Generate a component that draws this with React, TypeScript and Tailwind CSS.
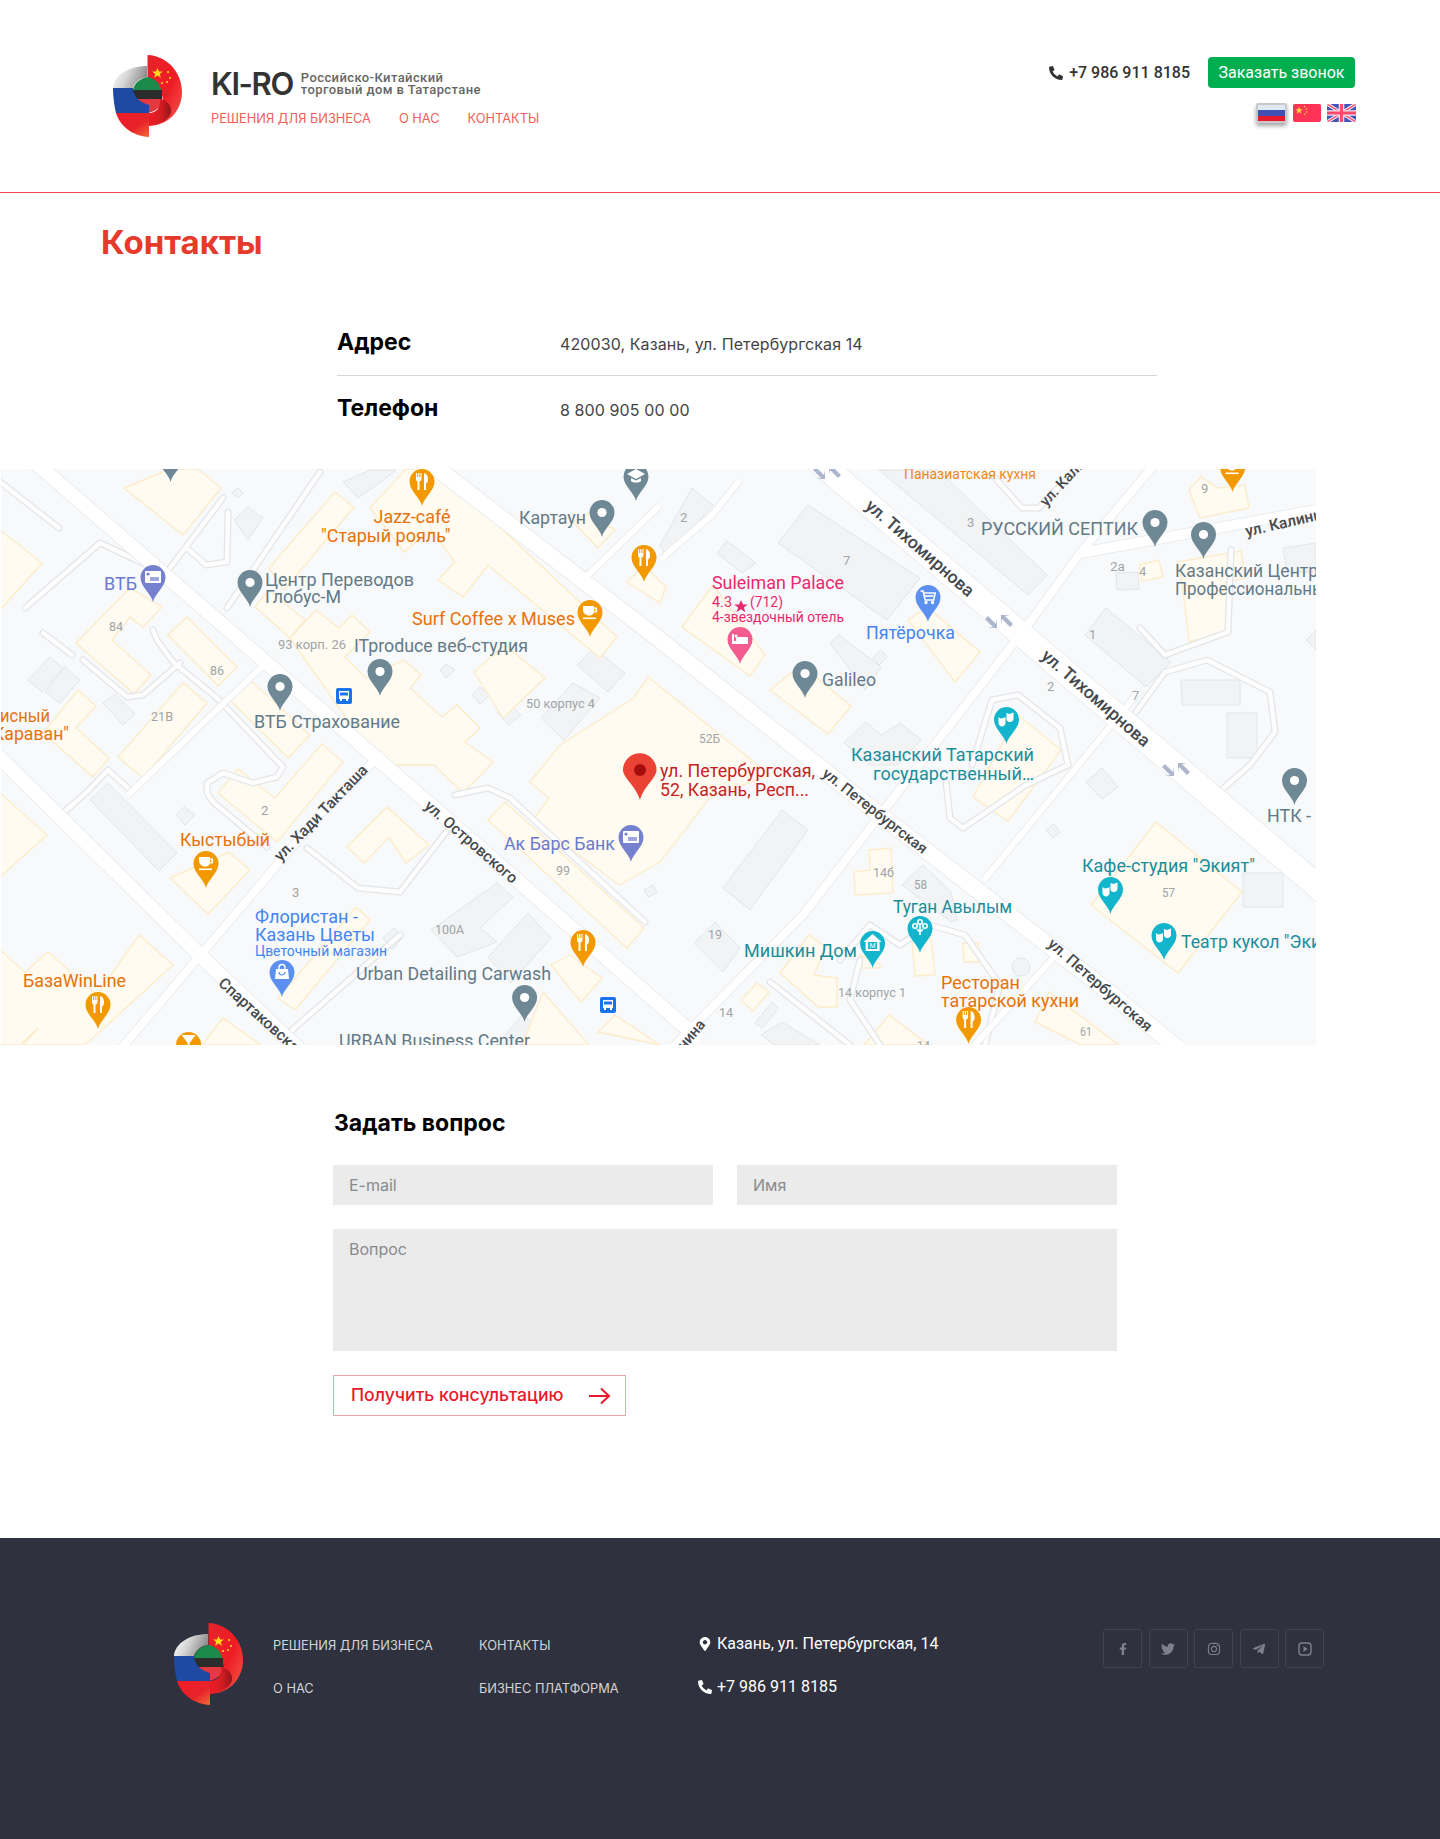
import React from "react";
import { FaPhoneAlt, FaMapMarkerAlt, FaFacebookF, FaTwitter, FaInstagram, FaTelegramPlane } from "react-icons/fa";

const pts = (a: number[]) => {
  const o: string[] = [];
  for (let i = 0; i < a.length; i += 2) o.push(a[i] + "," + a[i + 1]);
  return o.join(" ");
};

const YELLOW: number[][] = [
  [124,488,170,469,198,469,221,488,183,535],
  [0,530,42,563,0,610],
  [76,643,130,588,162,607,143,627,130,617,112,640,151,675,134,694],
  [168,635,187,617,237,667,218,686],
  [118,757,183,683,207,703,143,778],
  [43,733,78,690,96,706,76,728,109,758,93,777],
  [230,700,250,680,310,735,288,758],
  [290,638,316,610,339,628,352,615,370,632,345,657,366,678,404,660,421,675,410,688,442,717,457,705,480,728,465,742,493,762,463,793,434,765,379,765],
  [370,508,406,469,438,469,617,637,600,658,488,565,463,597,438,580,455,562,431,530,404,552],
  [269,568,335,492,354,507,284,590],
  [255,607,269,590,305,620,290,638],
  [573,522,589,513,615,530,598,548],
  [627,582,644,565,666,587,660,603],
  [474,672,505,645,545,678,503,718],
  [634,698,648,677,770,775,710,797,660,862,619,885,533,820,549,798,530,782,560,745],
  [347,847,387,807,429,845,406,863,389,837,364,863],
  [170,878,229,852,250,870,208,914],
  [218,793,238,769,275,798,322,744,343,762,277,842],
  [0,793,47,835,0,877],
  [0,950,25,972,48,952,97,995,139,935,173,965,85,1045,23,1045,38,1028,20,1045,0,1045],
  [278,998,356,907,370,920,295,1010],
  [202,1045,223,1018,261,1045],
  [551,965,570,955,602,978,581,1002],
  [543,992,589,1045,522,1045],
  [598,1032,615,1015,660,1045],
  [488,820,505,802,644,928,627,948],
  [854,872,870,870,869,850,891,848,893,893,855,895],
  [963,943,978,943,979,962,964,962],
  [912,940,931,938,935,975,915,976],
  [780,973,809,935,826,947,814,975,837,978,837,1007,818,1007],
  [860,955,881,965,879,968,861,968],
  [741,1000,757,983,769,992,753,1011],
  [864,1045,889,1015,929,1045],
  [1035,1022,1049,992,1119,1045,1081,1045],
  [1091,905,1156,822,1242,892,1178,973],
  [1018,715,1061,750,1008,821,973,797],
  [682,627,713,585,765,655,750,676],
  [908,620,927,607,980,652,955,682],
  [770,690,801,665,851,706,828,734],
  [1189,490,1201,477,1218,488,1245,485,1249,508,1200,518],
  [1139,565,1159,560,1163,577,1142,581],
  [1177,562,1241,551,1245,578,1226,582,1230,635,1189,641,1182,583],
];

const GRAY: number[][] = [
  [232,493,238,488,243,493,238,498],
  [234,520,248,507,263,518,248,540],
  [28,680,50,657,63,668,42,692],
  [45,692,65,667,80,680,60,703],
  [103,703,115,694,135,714,123,725],
  [440,670,446,664,455,670,446,678],
  [472,695,480,687,490,695,480,704],
  [497,712,507,702,521,715,509,725],
  [577,665,594,648,625,673,608,692],
  [541,718,573,683,600,698,564,740],
  [343,482,370,470,396,470,381,482,358,498],
  [660,545,692,488,713,505,668,558],
  [717,553,727,541,756,563,742,573],
  [778,543,808,505,920,578,887,620],
  [873,658,881,650,887,657,879,665],
  [830,643,839,635,881,667,865,690],
  [879,470,938,470,1047,575,1028,595],
  [1085,635,1106,608,1171,662,1146,687],
  [1116,573,1138,572,1139,589,1117,590],
  [1181,680,1240,680,1240,705,1182,705],
  [1227,713,1257,713,1257,758,1227,758],
  [1283,548,1316,543,1316,572,1287,572],
  [1306,640,1316,630,1316,650],
  [844,743,866,722,881,735,900,723,921,740,898,765,870,765],
  [723,888,782,810,808,830,750,910],
  [694,943,715,922,740,948,723,972],
  [1086,782,1102,768,1118,787,1102,799],
  [1046,830,1054,824,1060,832,1053,838],
  [1243,873,1283,873,1283,907,1243,907],
  [902,885,923,865,951,892,957,920,951,922],
  [755,1023,772,1002,779,1008,762,1028],
  [761,1035,782,1022,820,1045,774,1045],
  [90,800,108,783,177,853,159,871],
  [176,815,184,807,195,815,185,825],
  [431,930,497,883,513,897,480,928,497,942,457,957],
  [488,957,528,913,551,938,511,983],
  [644,890,653,885,657,893,648,897],
  [383,938,394,928,402,938,392,950],
  [497,1045,522,1015,549,1035,535,1045],
];

const LANES: number[][] = [
  [0,482,59,528],
  [43,633,72,655],
  [83,660,127,697,143,695,180,663],
  [25,608,100,543,147,565],
  [170,568,223,498],
  [189,550,206,565,227,562,228,512],
  [227,608,320,472],
  [153,630,157,640,173,662,217,698,283,767,277,777,253,783,223,773,207,783,207,793,213,802,267,847],
  [63,813,87,792,108,770,130,790],
  [307,848,358,888,400,892,446,832],
  [455,795,488,788,510,798,645,922],
  [290,1032,400,935],
  [770,982,850,1045],
  [946,782,950,818,963,828,1026,785,1068,765],
  [972,765,992,700,1018,695,1060,728,1068,765],
  [1140,628,1165,655,1228,632,1231,550],
  [1136,712,1165,672,1207,660,1270,692,1275,732,1250,765,1210,800],
  [988,470,1022,508,1039,508,1075,470],
  [840,960,870,925,900,945,930,925,965,935,1000,985,985,1045],
  [860,960,850,1000,880,1045],
];

const ROADS: [number[], number][] = [
  [[805,450,920,548,1096,698,1330,897],24],
  [[430,463,660,640,875,811,1100,985,1180,1050],16],
  [[30,458,471,840,700,1040],14],
  [[-10,748,210,965,300,1050],14],
  [[120,1050,321,813,375,760],8],
  [[1160,458,1081,552,1030,622,929,752,803,915,670,1050],8],
  [[1140,690,984,880],6],
  [[1056,955,970,1050],6],
  [[1081,553,1316,510],10],
  [[583,580,660,505],6],
  [[660,560,712,515,740,480],6],
  [[128,795,269,660],6],
];

type L = [string, number, number, number | null, string, number?];
const OR = "#e8710a", SL = "#627a88", TE = "#1a8d9b", IN = "#6d79cf", BL = "#4285f4", PK = "#e8296e", RD = "#c5221f", NO = "#a0a4a8";

const LABELS: L[] = [
  ["Jazz-café", 373.5, 523, 450.5, OR],
  ['"Старый рояль"', 321, 542, 450.5, OR],
  ["Картаун", 519, 524, 586, SL],
  ["ВТБ", 104, 590, 137, IN],
  ["Центр Переводов", 265, 586, 414, SL],
  ["Глобус-М", 265, 603, 341, SL],
  ["Surf Coffee x Muses", 412, 625, 575, OR],
  ["93 корп. 26", 278, 649, 346, NO, 13],
  ["ITproduce веб-студия", 354, 652, 528, SL],
  ["84", 109, 631, 123, NO, 13],
  ["86", 210, 675, 224, NO, 13],
  ["21В", 151, 721, 173, NO, 13],
  ["50 корпус 4", 526, 708, 595, NO, 13],
  ["ВТБ Страхование", 254, 728, 400, SL],
  ["исный", 0, 722, 50, OR],
  ['Караван"', -7, 740, 69, OR],
  ["Suleiman Palace", 712, 589, 844, PK],
  ["4.3", 712, 607, 732, PK, 14],
  ["(712)", 750, 607, 783, PK, 14],
  ["4-звездочный отель", 712, 622, 844, PK, 14],
  ["Galileo", 822, 686, 876, SL],
  ["Пятёрочка", 866, 639, 955, BL],
  ["Панaзиатская кухня", 904, 479, 1036, "#ee8a14", 14],
  ["9", 1201, 493, null, NO, 13],
  ["3", 967, 527, null, NO, 13],
  ["РУССКИЙ СЕПТИК", 981, 535, 1138, SL],
  ["2а", 1110, 571, 1125, NO, 13],
  ["4", 1139, 576, null, NO, 13],
  ["Казанский Центр", 1175, 577, 1318, SL],
  ["Профессиональный", 1175, 595, 1335, SL],
  ["2", 1047, 691, null, NO, 13],
  ["7", 1132, 700, null, NO, 13],
  ["1", 1089, 639, null, NO, 13],
  ["7", 843, 565, null, NO, 13],
  ["2", 680, 522, null, NO, 13],
  ["52Б", 699, 743, 720, NO, 13],
  ["Казанский Татарский", 851, 761, 1034, TE],
  ["государственный…", 873, 780, 1034, TE],
  ["ул. Петербургская,", 660, 777, 815, RD],
  ["52, Казань, Респ...", 660, 796, 809, RD],
  ["14б", 873, 877, 894, NO, 13],
  ["58", 914, 889, 927, NO, 13],
  ["Туган Авылым", 893, 913, 1012, TE],
  ["Мишкин Дом", 744, 957, 857, TE],
  ["19", 708, 939, 722, NO, 13],
  ["14 корпус 1", 838, 997, 906, NO, 13],
  ["14", 719, 1017, 733, NO, 13],
  ["Ресторан", 941, 989, 1020, OR],
  ["татарской кухни", 941, 1007, 1079, OR],
  ["61", 1080, 1036, 1092, NO, 13],
  ["14", 917, 1050, 930, NO, 13],
  ["57", 1162, 897, 1175, NO, 13],
  ['Кафе-студия "Экият"', 1082, 872, 1255, TE],
  ['Театр кукол "Экият"', 1181, 948, 1345, TE],
  ["НТК -", 1267, 822, 1311, SL],
  ["Кыстыбый", 180, 846, 270, OR],
  ["2", 261, 815, null, NO, 13],
  ["3", 292, 897, null, NO, 13],
  ["Флористан -", 255, 923, 358, BL],
  ["Казань Цветы", 255, 941, 375, BL],
  ["Цветочный магазин", 255, 956, 387, BL, 14],
  ["Urban Detailing Carwash", 356, 980, 551, SL],
  ["Ак Барс Банк", 504, 850, 615, IN],
  ["99", 556, 875, 570, NO, 13],
  ["100А", 435, 934, 464, NO, 13],
  ["БазаWinLine", 23, 987, 126, OR],
  ["URBAN Business Center", 339, 1047, 530, SL],
];

const ROADLABELS: [string, number, number, number, number][] = [
  ["ул. Тихомирнова", 920, 548, 41, 17.5],
  ["ул. Тихомирнова", 1096, 698, 41, 17.5],
  ["ул. Петербургская", 875, 811, 38, 15],
  ["ул. Петербургская", 1100, 985, 41, 15.5],
  ["ул. Хади Такташа", 321, 813, -46, 15.5],
  ["ул. Островского", 471, 842, 41, 15.5],
  ["Спартаковская", 262, 1018, 42, 15.5],
  ["ул. Калинина", 1292, 521, -13, 15.5],
  ["ул. Калинина", 1074, 470, -47, 15],
  ["Калинина", 680, 1048, -50, 15],
];

type PinT = [number, number, string, string];
const GY = "#6f8896", OG = "#f29900", TL = "#12b5cb", BU = "#5b8ff0", VI = "#7580cf";
const PINS: PinT[] = [
  [170.5,482,GY,"dot"],[422,506,OG,"fork"],[636,501,GY,"school"],[602,537,GY,"dot"],[644,582,OG,"fork"],
  [153,602,VI,"card"],[250,607,GY,"dot"],[590,637,OG,"cup"],[380,696,GY,"dot"],[280,711,GY,"dot"],
  [740,664,"#f25c8e","bed"],[805,698,GY,"dot"],[928,622,BU,"cart"],[1155,547,GY,"dot"],[1203.5,559,GY,"dot"],
  [1232.6,492,OG,"cup"],[1006.5,744,TL,"mask"],[920,953,TL,"tree"],[872.6,968,TL,"house"],[968.6,1044,OG,"fork"],
  [1110.5,914,TL,"mask"],[1164,960,TL,"mask"],[1294.5,805,GY,"dot"],[206,888,OG,"cup"],[282,997,BU,"bag"],
  [524.6,1022,GY,"dot"],[583,967,OG,"fork"],[631,862,VI,"card"],[98,1029,OG,"fork"],[188.6,1069,OG,"glass"],
];

function PinIcon({ k }: { k: string }) {
  const c = -24.5;
  if (k === "dot") return <circle cx={0} cy={c} r={4.6} fill="#fff" />;
  if (k === "fork")
    return (
      <g fill="#fff">
        <path d="M-6 -33 h1.2 v4 h1 v-4 h1.2 v4 h1 v-4 h1.1 v6 c0 1.4 -1 2.2 -2 2.5 v8.5 h-2 v-8.5 c-1 -.3 -1.5 -1.1 -1.5 -2.5z" />
        <path d="M2 -33 c2.6 .4 4 3 4 6.5 c0 2 -.6 3.5 -2 4 v6.5 h-2z" />
      </g>
    );
  if (k === "cup")
    return (
      <g fill="#fff">
        <path d="M-7 -31 h11 v1.5 h3 v5 h-3.2 c-.4 1.6 -2 3 -3.8 3 h-1 c-3 0 -6 -2.5 -6 -5.5z M4 -28 v2.2 h1.4 v-2.2z" fillRule="evenodd" />
        <rect x={-7} y={-19.5} width={13} height={1.6} />
      </g>
    );
  if (k === "card")
    return (
      <g>
        <rect x={-8} y={-31} width={16} height={12} rx={1} fill="#fff" />
        <circle cx={-5} cy={-28} r={1.6} fill={VI} />
        <rect x={-3} y={-25} width={9} height={4} fill={VI} opacity={0.7} />
      </g>
    );
  if (k === "cart")
    return (
      <g fill="none" stroke="#fff" strokeWidth={1.6}>
        <path d="M-7.5 -31 h2.5 l2.2 9 h8.5 l1.5 -7 h-11.2" />
        <path d="M-3.5 -26 h9" />
        <circle cx={-2} cy={-19.5} r={.9} fill="#fff" />
        <circle cx={4.5} cy={-19.5} r={.9} fill="#fff" />
      </g>
    );
  if (k === "bed")
    return (
      <g fill="#fff">
        <rect x={-8} y={-30} width={2} height={10} />
        <rect x={-8} y={-23} width={16} height={3} />
        <rect x={-4} y={-27} width={12} height={4} rx={1} />
        <circle cx={-4} cy={-28} r={1.6} />
      </g>
    );
  if (k === "mask")
    return (
      <g fill="#fff">
        <path d="M-8 -27 l2 1.5 l3 -.5 l2 -1 v6 c0 2 -2 3.5 -3.5 3.5 s-3.5 -1.5 -3.5 -3.5z" />
        <path d="M0 -31 l3 1 l4 -1.5 v6 c0 2 -1.5 3.5 -3.5 3.5 c-1.5 0 -2.5 -.5 -3.5 -2z" />
      </g>
    );
  if (k === "bag")
    return (
      <g>
        <path d="M-6 -28 h12 l1 10 h-14z" fill="#fff" />
        <path d="M-3 -28 v-1.5 a3 3 0 0 1 6 0 v1.5" fill="none" stroke="#fff" strokeWidth={1.4} />
        <path d="M-3 -25 a3 3 0 0 0 6 0" fill="none" stroke={BU} strokeWidth={1.2} />
      </g>
    );
  if (k === "house")
    return (
      <g>
        <path d="M0 -34 L9 -26 h-2 v9 h-14 v-9 h-2z" fill="#fff" />
        <rect x={-4.5} y={-26} width={9} height={7} fill={TL} />
        <text x={0} y={-20} fontSize={7} fill="#fff" textAnchor="middle" className="font-['Roboto']">M</text>
      </g>
    );
  if (k === "tree")
    return (
      <g fill="none" stroke="#fff" strokeWidth={1.6}>
        <circle cx={0} cy={-31} r={2.2} />
        <circle cx={-5} cy={-27} r={2.2} />
        <circle cx={5} cy={-27} r={2.2} />
        <path d="M0 -28 v10 M-3 -24 l3 3 l3 -3" />
      </g>
    );
  if (k === "school")
    return <path d="M0 -32 L9 -27 L0 -22 L-9 -27z M-5 -23 v3 c2 2 8 2 10 0 v-3 l-5 2.5z" fill="#fff" />;
  if (k === "glass") return <path d="M-7 -34 h14 L1 -26 v5 h3 v1.5 h-8 V-21 h3 v-5z" fill="#fff" />;
  return null;
}

function Pin({ x, y, color, k }: { x: number; y: number; color: string; k: string }) {
  return (
    <g transform={`translate(${x} ${y})`}>
      <path d="M0 0 C-1.5 -8 -12.5 -15 -12.5 -24.5 A12.5 12.5 0 1 1 12.5 -24.5 C12.5 -15 1.5 -8 0 0Z" fill={color} />
      <PinIcon k={k} />
    </g>
  );
}

function BusStop({ x, y }: { x: number; y: number }) {
  return (
    <g transform={`translate(${x} ${y})`}>
      <rect x={-8} y={-8} width={16} height={16} rx={2} fill="#1a73e8" />
      <path d="M-5 -5 h10 v8 h-1 v2 h-2 v-2 h-4 v2 h-2 v-2 h-1z" fill="#fff" />
      <rect x={-4} y={-3.5} width={8} height={3} fill="#1a73e8" />
    </g>
  );
}

function Arrows({ x, y }: { x: number; y: number }) {
  return (
    <g transform={`translate(${x} ${y})`} fill="#aeb6cd">
      <path d="M-2 -6 L6 2 L7 -3 L7 6 L-2 6 L3 5 L-5 -3z" />
      <path d="M20 5 L12 -3 L11 2 L11 -7 L20 -7 L15 -6 L23 2z" />
    </g>
  );
}

function MapCanvas() {
  return (
    <svg viewBox="1 469 1315 576" width={1315} height={576} className="block font-['Roboto']">
      <rect x={0} y={469} width={1320} height={580} fill="#f8f9fa" />
      {GRAY.map((g, i) => (
        <polygon key={i} points={pts(g)} fill="#f1f3f4" stroke="#e3e5e8" strokeWidth={1} />
      ))}
      {YELLOW.map((g, i) => (
        <polygon key={i} points={pts(g)} fill="#fffbf0" stroke="#fdeccb" strokeWidth={1.4} />
      ))}
      <circle cx={1021} cy={967} r={9} fill="#f1f3f4" stroke="#e3e5e8" />
      {LANES.map((g, i) => (
        <polyline key={i} points={pts(g)} fill="none" stroke="#e3e5e8" strokeWidth={7} strokeLinejoin="round" strokeLinecap="round" />
      ))}
      {LANES.map((g, i) => (
        <polyline key={i} points={pts(g)} fill="none" stroke="#fdfdfe" strokeWidth={4.5} strokeLinejoin="round" strokeLinecap="round" />
      ))}
      {ROADS.map(([g, w], i) => (
        <polyline key={i} points={pts(g)} fill="none" stroke="#e6e8eb" strokeWidth={w + 1.5} strokeLinejoin="round" />
      ))}
      {ROADS.map(([g, w], i) => (
        <polyline key={i} points={pts(g)} fill="none" stroke="#ffffff" strokeWidth={w} strokeLinejoin="round" />
      ))}
      <Arrows x={818} y={473} />
      <Arrows x={990} y={622} />
      <Arrows x={1167} y={770} />
      <path d="M640 800 C636 786 623 778 623 770 A16.5 16.5 0 1 1 656.5 770 C656.5 778 644 786 640 800Z" fill="#ea4335" />
      <circle cx={640} cy={770} r={6} fill="#a50e0e" />
      {PINS.map(([x, y, c, k], i) => (
        <Pin key={i} x={x} y={y} color={c} k={k} />
      ))}
      <BusStop x={344} y={696} />
      <BusStop x={608} y={1005} />
      <path d="M741 600 l2 4.6 h4.8 l-3.9 2.9 l1.5 4.7 l-4.4 -3 l-4.4 3 l1.5 -4.7 l-3.9 -2.9 h4.8z" fill={PK} />
      {LABELS.map(([t, x, y, x2, c, s], i) => (
        <text
          key={i}
          x={x}
          y={y}
          fill={c}
          fontSize={s ?? 18}
          {...(x2 !== null ? { textLength: x2 - x, lengthAdjust: "spacingAndGlyphs" as const } : {})}
        >
          {t}
        </text>
      ))}
      {ROADLABELS.map(([t, x, y, a, s], i) => (
        <text
          key={i}
          x={x}
          y={y}
          fill="#45494d"
          fontSize={s}
          fontWeight={500}
          textAnchor="middle"
          dominantBaseline="central"
          transform={`rotate(${a} ${x} ${y})`}
        >
          {t}
        </text>
      ))}
    </svg>
  );
}

function Logo({ id }: { id: string }) {
  return (
    <svg viewBox="13 10 70 82" width={70} height={82} className="block shrink-0">
      <defs>
        <linearGradient id={id + "r"} x1="0" y1="0" x2="1" y2="1">
          <stop offset="0" stopColor="#e8232a" />
          <stop offset="0.55" stopColor="#ee1c25" />
          <stop offset="0.8" stopColor="#f0413c" />
          <stop offset="1" stopColor="#e8141c" />
        </linearGradient>
        <linearGradient id={id + "d"} x1="0" y1="0" x2="1" y2="0">
          <stop offset="0" stopColor="#ee1c25" />
          <stop offset="0.55" stopColor="#d41c22" />
          <stop offset="1" stopColor="#94151a" />
        </linearGradient>
        <linearGradient id={id + "g"} x1="0" y1="0" x2="1" y2="0.3">
          <stop offset="0" stopColor="#ffffff" />
          <stop offset="0.5" stopColor="#d6d6d6" />
          <stop offset="1" stopColor="#8e8e8e" />
        </linearGradient>
        <linearGradient id={id + "b"} x1="0" y1="0" x2="1" y2="1">
          <stop offset="0" stopColor="#ee1c25" />
          <stop offset="0.6" stopColor="#e8232a" />
          <stop offset="1" stopColor="#f26a3a" />
        </linearGradient>
      </defs>
      <path d="M13 43 C14 30 29 21 47 21 L47 32 C40 33 35 37 33 43Z" fill={`url(#${id}g)`} />
      <path d="M47.5 10 C68 11 82 28 82 47 C82 66 68 81 48 81 L48 68 C58 68 65 60 62 50 C60 42 54 35 47.5 33Z" fill={`url(#${id}r)`} />
      <path d="M33 45 C34 38 41 33 47.5 32 C54 33 60 38 61 45Z" fill="#1b8a4b" />
      <rect x={33} y={45} width={29} height={9} fill="#2c2c2c" />
      <path d="M35 54 H62 C62 60 58 66 48 68 C42 66 37 60 35 54Z" fill="#e43a3f" />
      <path d="M60 54 C66 55 72 60 71 67 C70 74 60 80 48 80 L48 70 C56 69 61 62 60 54Z" fill={`url(#${id}d)`} />
      <path d="M13 43 H33 C33 51 39 57 49 60 V68 H16 C14 60 13 50 13 43Z" fill="#1f4aa3" />
      <path d="M16 68 H49 V92 C32 91 20 81 16 68Z" fill={`url(#${id}b)`} />
      <path d="M57.5 23 l1.5 3.6 h3.8 l-3 2.4 l1.1 3.7 l-3.4 -2.1 l-3.4 2.1 l1.1 -3.7 l-3 -2.4 h3.8z" fill="#ffd91a" />
      <circle cx={68} cy={27} r={1.1} fill="#ffd91a" />
      <circle cx={70} cy={33} r={1.1} fill="#ffd91a" />
      <circle cx={67} cy={37} r={1.1} fill="#ffd91a" />
      <circle cx={62} cy={38} r={1.1} fill="#ffd91a" />
    </svg>
  );
}

function FlagRU() {
  return (
    <div className="w-[31px] h-[20px] rounded-[2px] border-2 border-[#c9c9c9] shadow-[0_3px_4px_rgba(0,0,0,0.35)] overflow-hidden flex flex-col">
      <div className="flex-1 bg-[#dfe9f3]" />
      <div className="flex-1 bg-[#3f51b5]" />
      <div className="flex-1 bg-[#e8192c]" />
    </div>
  );
}
function FlagCN() {
  return (
    <svg width={28} height={18} viewBox="0 0 28 18" className="block rounded-[2px]">
      <rect width={28} height={18} fill="#ff3355" />
      <path d="M6 2.6 l1 2.7 h2.8 l-2.3 1.7 l.9 2.7 l-2.4 -1.7 l-2.4 1.7 l.9 -2.7 l-2.3 -1.7 h2.8z" fill="#ffd83d" />
      <circle cx={11.5} cy={2.6} r={0.8} fill="#ffd83d" />
      <circle cx={13.5} cy={5} r={0.8} fill="#ffd83d" />
      <circle cx={13.5} cy={8} r={0.8} fill="#ffd83d" />
      <circle cx={11.5} cy={10.2} r={0.8} fill="#ffd83d" />
    </svg>
  );
}
function FlagUK() {
  return (
    <svg width={29} height={18} viewBox="0 0 29 18" className="block rounded-[2px]">
      <rect width={29} height={18} fill="#4354b5" />
      <path d="M0 0 L29 18 M29 0 L0 18" stroke="#f2e6ee" strokeWidth={3.6} />
      <path d="M0 0 L29 18 M29 0 L0 18" stroke="#ff4b6b" strokeWidth={1.3} />
      <path d="M14.5 0 V18 M0 9 H29" stroke="#f2e6ee" strokeWidth={5.6} />
      <path d="M14.5 0 V18 M0 9 H29" stroke="#ff4b6b" strokeWidth={3.2} />
    </svg>
  );
}

function Social({ children }: { children: React.ReactNode }) {
  return (
    <div className="w-[39px] h-[39px] rounded-[3px] border border-[#41434f] flex items-center justify-center text-[#7e808a] text-[14px]">
      {children}
    </div>
  );
}

export default function App() {
  return (
    <div className="w-[1440px] bg-white font-['Roboto',sans-serif]">
      <header className="h-[193px] border-b border-[#ec4a55] flex justify-between pl-[113px] pr-[85px] pt-[55px]">
        <div className="flex">
          <Logo id="h" />
          <div className="ml-[28px]">
            <div className="flex items-center mt-[15px] h-[28px]">
              <span className="font-['Inter'] font-semibold text-[31px] leading-[28px] tracking-[-1.4px] text-[#333333]">KI-RO</span>
              <span className="ml-[8px] text-[13px] leading-[12px] font-medium tracking-[0.4px] text-[#666666]">
                Российско-Китайский
                <br />
                торговый дом в Татарстане
              </span>
            </div>
            <nav className="flex gap-[28px] mt-[11px] text-[12.8px] leading-[20px] text-[#ef5f56] font-['Inter']">
              <a>РЕШЕНИЯ ДЛЯ БИЗНЕСА</a>
              <a>О НАС</a>
              <a>КОНТАКТЫ</a>
            </nav>
          </div>
        </div>
        <div className="flex flex-col items-end">
          <div className="flex items-center mt-[2px]">
            <FaPhoneAlt className="text-[#333333] text-[14px] mr-[6px]" />
            <span className="text-[16px] font-medium text-[#333333]">+7 986 911 8185</span>
            <button className="ml-[18px] w-[147px] h-[31px] rounded-[4px] bg-[#00ae4f] text-white text-[16px]">
              Заказать звонок
            </button>
          </div>
          <div className="flex items-center gap-[6px] mt-[15px] -mr-[1px]">
            <FlagRU />
            <FlagCN />
            <FlagUK />
          </div>
        </div>
      </header>

      <section className="pl-[101px] pt-[29px] font-['Inter']">
        <h1 className="text-[33px] leading-[40px] font-bold text-[#e63a2c]">Контакты</h1>
        <div className="ml-[236px] w-[820px] mt-[47px]">
          <div className="h-[67px] border-b border-[#d6d6d6] flex items-center">
            <div className="w-[223px] text-[23px] font-bold text-black">Адрес</div>
            <div className="text-[16px] tracking-[0.1px] text-[#444444] mt-[3px]">420030, Казань, ул. Петербургская 14</div>
          </div>
          <div className="h-[65px] flex items-center">
            <div className="w-[223px] text-[23px] font-bold text-black">Телефон</div>
            <div className="text-[16px] tracking-[0.1px] text-[#444444] mt-[3px]">8 800 905 00 00</div>
          </div>
        </div>
      </section>

      <div className="mt-[28px] ml-px w-[1315px] h-[576px] overflow-hidden">
        <MapCanvas />
      </div>

      <section className="pl-[333px] pt-[62px] pb-[122px] font-['Inter']">
        <h2 className="ml-[1px] text-[23px] leading-[32px] font-bold text-black">Задать вопрос</h2>
        <div className="grid grid-cols-2 gap-x-[24px] gap-y-[24px] w-[784px] mt-[26px]">
          <div className="h-[40px] bg-[#ebebeb] px-[16px] flex items-center text-[16px] text-[#8a8a8a]">E-mail</div>
          <div className="h-[40px] bg-[#ebebeb] px-[16px] flex items-center text-[16px] text-[#8a8a8a]">Имя</div>
          <div className="col-span-2 h-[122px] bg-[#ebebeb] px-[16px] pt-[8px] text-[16px] text-[#8a8a8a]">Вопрос</div>
        </div>
        <button className="mt-[24px] w-[293px] h-[41px] border border-[#efa5ab] flex items-center justify-between pl-[17px] pr-[14px] text-[#e8192c] text-[17.6px] font-medium">
          <span>Получить консультацию</span>
          <svg width={23} height={18} viewBox="0 0 23 18" fill="none" stroke="#e8192c" strokeWidth={2}>
            <path d="M1 9 H21 M13 1.5 L21 9 L13 16.5" />
          </svg>
        </button>
      </section>

      <footer className="h-[301px] bg-[#2f313e] flex items-start pl-[174px] pt-[85px]">
        <Logo id="f" />
        <div className="ml-[29px] w-[206px] mt-[13px] flex flex-col gap-[23px] font-['Inter'] text-[12.8px] leading-[20px] text-[#d4d4d8]">
          <a>РЕШЕНИЯ ДЛЯ БИЗНЕСА</a>
          <a>О НАС</a>
        </div>
        <div className="w-[216px] mt-[13px] flex flex-col gap-[23px] font-['Inter'] text-[12.8px] leading-[20px] text-[#d4d4d8]">
          <a>КОНТАКТЫ</a>
          <a>БИЗНЕС ПЛАТФОРМА</a>
        </div>
        <div className="w-[408px] mt-[9px] flex flex-col gap-[19px] text-[16px] leading-[24px] text-white">
          <div className="flex items-center">
            <FaMapMarkerAlt className="text-[14px] w-[22px] -ml-[1px] mr-[1px]" />
            <span>Казань, ул. Петербургская, 14</span>
          </div>
          <div className="flex items-center">
            <FaPhoneAlt className="text-[14px] w-[22px] -ml-[1px] mr-[1px]" />
            <span>+7 986 911 8185</span>
          </div>
        </div>
        <div className="mt-[6px] flex gap-[6.6px]">
          <Social><FaFacebookF className="text-[12px]" /></Social>
          <Social><FaTwitter /></Social>
          <Social><FaInstagram /></Social>
          <Social><FaTelegramPlane /></Social>
          <Social>
            <svg width={14} height={14} viewBox="0 0 14 14" fill="none">
              <rect x={1} y={1} width={12} height={12} rx={3} stroke="currentColor" strokeWidth={1.4} />
              <path d="M5.5 4.2 L9.6 7 L5.5 9.8Z" fill="currentColor" />
            </svg>
          </Social>
        </div>
      </footer>
    </div>
  );
}
